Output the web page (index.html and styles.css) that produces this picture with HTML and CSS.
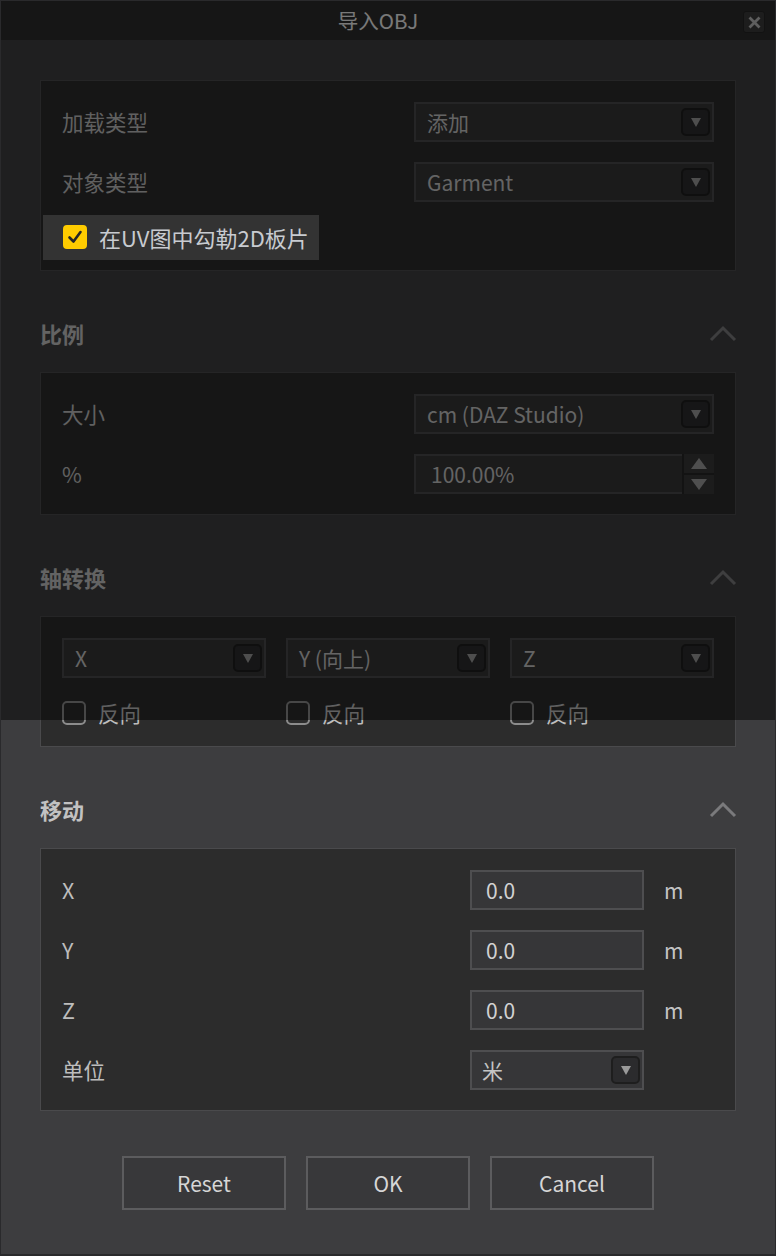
FILE: index.html
```html
<!DOCTYPE html>
<html lang="zh-CN">
<head>
<meta charset="utf-8">
<title>导入OBJ</title>
<link rel="stylesheet" href="styles.css">
</head>
<body>
<div class="dialog">
  <div class="titlebar">
    <span></span>
    <span class="title">导入OBJ</span>
    <button class="close" aria-label="关闭">
      <svg width="13" height="13" viewBox="0 0 13 13"><path d="M1.5 1.5 L11.5 11.5 M11.5 1.5 L1.5 11.5" stroke="#b8b8b8" stroke-width="2.8" fill="none"/></svg>
    </button>
  </div>

  <div class="content">
    <div class="panel p1">
      <div class="row">
        <span class="label">加载类型</span>
        <div class="select wide"><span class="value">添加</span><span class="arrow"><i></i></span></div>
      </div>
      <div class="row">
        <span class="label">对象类型</span>
        <div class="select wide"><span class="value">Garment</span><span class="arrow"><i></i></span></div>
      </div>
      <div class="check spotlight">
        <span class="box checked">
          <svg width="20" height="20" viewBox="0 0 20 20"><path d="M4.5 10.5 L8.5 14.5 L15.5 5" stroke="#262626" stroke-width="2.6" fill="none" stroke-linecap="round" stroke-linejoin="round"/></svg>
        </span>
        <span class="check-text big">在UV图中勾勒2D板片</span>
      </div>
    </div>

    <div class="section-head">
      <span class="section-title">比例</span>
      <svg class="chev" width="28" height="18" viewBox="0 0 28 18"><path d="M2 16 L14 4 L26 16" stroke="#7a7a7c" stroke-width="3" fill="none"/></svg>
    </div>

    <div class="panel p2">
      <div class="row">
        <span class="label">大小</span>
        <div class="select wide"><span class="value">cm (DAZ Studio)</span><span class="arrow"><i></i></span></div>
      </div>
      <div class="row">
        <span class="label">%</span>
        <div class="spin wide">
          <span class="value spin-value">100.00%</span>
          <span class="spin-btns">
            <span class="spin-btn"><i class="up"></i></span>
            <span class="spin-btn"><i class="down"></i></span>
          </span>
        </div>
      </div>
    </div>

    <div class="section-head">
      <span class="section-title">轴转换</span>
      <svg class="chev" width="28" height="18" viewBox="0 0 28 18"><path d="M2 16 L14 4 L26 16" stroke="#7a7a7c" stroke-width="3" fill="none"/></svg>
    </div>

    <div class="panel p3">
      <div class="axis-grid">
        <div class="select"><span class="value">X</span><span class="arrow"><i></i></span></div>
        <div class="select"><span class="value">Y (向上)</span><span class="arrow"><i></i></span></div>
        <div class="select"><span class="value">Z</span><span class="arrow"><i></i></span></div>
        <div class="check plain"><span class="box"></span><span class="check-text dim">反向</span></div>
        <div class="check plain"><span class="box"></span><span class="check-text dim">反向</span></div>
        <div class="check plain"><span class="box"></span><span class="check-text dim">反向</span></div>
      </div>
    </div>

    <div class="section-head">
      <span class="section-title">移动</span>
      <svg class="chev" width="28" height="18" viewBox="0 0 28 18"><path d="M2 16 L14 4 L26 16" stroke="#7a7a7c" stroke-width="3" fill="none"/></svg>
    </div>

    <div class="panel p4">
      <div class="move-grid">
        <span class="label">X</span>
        <div class="input"><span class="value">0.0</span></div>
        <span class="unit">m</span>

        <span class="label">Y</span>
        <div class="input"><span class="value">0.0</span></div>
        <span class="unit">m</span>

        <span class="label">Z</span>
        <div class="input"><span class="value">0.0</span></div>
        <span class="unit">m</span>

        <span class="label">单位</span>
        <div class="select small"><span class="value">米</span><span class="arrow"><i></i></span></div>
        <span class="unit"></span>
      </div>
    </div>

    <div class="buttons">
      <button class="btn">Reset</button>
      <button class="btn">OK</button>
      <button class="btn">Cancel</button>
    </div>
  </div>

  <div class="overlay"></div>
</div>
</body>
</html>
```

FILE: styles.css
```css
* { box-sizing: border-box; }

html, body {
  margin: 0;
  padding: 0;
  background: #2a2a2a;
}

body {
  font-family: "Noto Sans CJK SC", "Noto Sans", "Liberation Sans", sans-serif;
  color: #c4c4c4;
}

.dialog {
  position: relative;
  width: 776px;
  height: 1256px;
  border: 1px solid #2a2a2c;
  border-bottom-width: 2px;
  background: #3d3d3f;
  overflow: hidden;
}

.titlebar {
  height: 39px;
  background: #2c2c2c;
  display: grid;
  grid-template-columns: 1fr auto 1fr;
  align-items: center;
}

.title {
  font-size: 20.5px;
  color: #eeeeee;
  line-height: 1;
  margin-right: 20px;
}

.close {
  justify-self: end;
  margin-right: 10px;
  margin-top: 3px;
  width: 22px;
  height: 22px;
  padding: 0;
  border: 1px solid #242424;
  border-radius: 3px;
  background: #3a3a3a;
  display: flex;
  align-items: center;
  justify-content: center;
}

.content {
  padding: 40px 39px 0;
}

.panel {
  border: 1px solid #4a4a4c;
  background: #2c2c2c;
  padding: 21px 21px 20px;
}

.p1 { padding-bottom: 10px; }
.p3 { padding-bottom: 21px; }

.row {
  display: flex;
  align-items: center;
  justify-content: space-between;
  height: 40px;
}

.row + .row { margin-top: 20px; }

.label {
  font-size: 21.5px;
  color: #bdbdbd;
  line-height: 1;
}

.value {
  font-size: 21px;
  color: #c4c4c4;
  line-height: 1;
  white-space: nowrap;
}

.select {
  height: 40px;
  border: 2px solid #4a4a4c;
  background: #353535;
  display: flex;
  align-items: center;
  justify-content: space-between;
  padding: 0 2px 0 11px;
}

.wide { width: 300px; }

.arrow {
  width: 29px;
  height: 28px;
  border: 2px solid #1e1e1e;
  border-radius: 5px;
  background: #2b2b2d;
  display: flex;
  align-items: center;
  justify-content: center;
}

.arrow i {
  width: 0;
  height: 0;
  border-left: 5px solid transparent;
  border-right: 5px solid transparent;
  border-top: 9px solid #9a9a9a;
}

.spin {
  height: 40px;
  border: 2px solid #4a4a4c;
  border-right: 0;
  background: #353535;
  display: flex;
  align-items: center;
  justify-content: space-between;
  padding-left: 15px;
}

.spin-btns {
  width: 32px;
  height: 40px;
  margin-top: -2px;
  margin-bottom: -2px;
  display: flex;
  flex-direction: column;
  gap: 2px;
  background: #262626;
  border-left: 2px solid #262626;
}

.spin-btn {
  flex: 1;
  background: #383838;
  display: flex;
  align-items: center;
  justify-content: center;
}

.spin-btn i.up {
  width: 0; height: 0;
  border-left: 8px solid transparent;
  border-right: 8px solid transparent;
  border-bottom: 11px solid #9c9c9c;
}

.spin-btn i.down {
  width: 0; height: 0;
  border-left: 8px solid transparent;
  border-right: 8px solid transparent;
  border-top: 11px solid #9c9c9c;
}

.check {
  display: flex;
  align-items: center;
  gap: 12px;
}

.box {
  width: 24px;
  height: 24px;
  border: 2px solid #8c8c8c;
  border-radius: 5px;
  display: flex;
  align-items: center;
  justify-content: center;
  flex: none;
}

.box.checked {
  background: #ffcc00;
  border-color: #ffcc00;
  border-radius: 4px;
}

.check-text {
  font-size: 21.5px;
  line-height: 1;
  color: #c8cbd0;
  white-space: nowrap;
}

.check-text.big { font-size: 22px; }

.check-text.dim { color: #bdbdbd; }

.spotlight {
  position: relative;
  z-index: 2;
  width: fit-content;
  margin: 13px 0 0 -19px;
  padding: 10px 10px 11px 20px;
  background: #333333;
}

.section-head {
  height: 40px;
  margin: 42px 0 19px;
  display: flex;
  align-items: center;
  justify-content: space-between;
}

.section-title {
  font-size: 22px;
  font-weight: 700;
  color: #c2c2c2;
  line-height: 1;
}

.chev { margin-right: -1px; }

.axis-grid {
  display: grid;
  grid-template-columns: repeat(3, 1fr);
  column-gap: 20px;
  row-gap: 23px;
}

.axis-grid .check { height: 24px; }

.move-grid {
  display: grid;
  grid-template-columns: 1fr 174px 70px;
  grid-auto-rows: 40px;
  row-gap: 20px;
  align-items: center;
}

.input {
  height: 40px;
  border: 2px solid #4e4e50;
  background: #363638;
  display: flex;
  align-items: center;
  padding-left: 14px;
}

.input .value { color: #d2d2d2; }

.select.small {
  background: #363638;
  border-color: #4e4e50;
  padding-left: 10px;
}

.unit {
  padding-left: 20px;
  font-size: 21px;
  color: #c4c4c4;
  line-height: 1;
}

.buttons {
  margin-top: 45px;
  display: flex;
  justify-content: center;
  gap: 20px;
}

.btn {
  width: 164px;
  height: 54px;
  border: 2px solid #5c5c5e;
  background: #38383a;
  color: #d6d6d6;
  font-family: "Noto Sans CJK SC", "Noto Sans", sans-serif;
  font-size: 21px;
  padding: 0;
}

.overlay {
  position: absolute;
  left: -1px;
  right: -1px;
  top: -1px;
  height: 720px;
  background: rgba(0, 0, 0, 0.49);
  z-index: 1;
  pointer-events: none;
}
```
